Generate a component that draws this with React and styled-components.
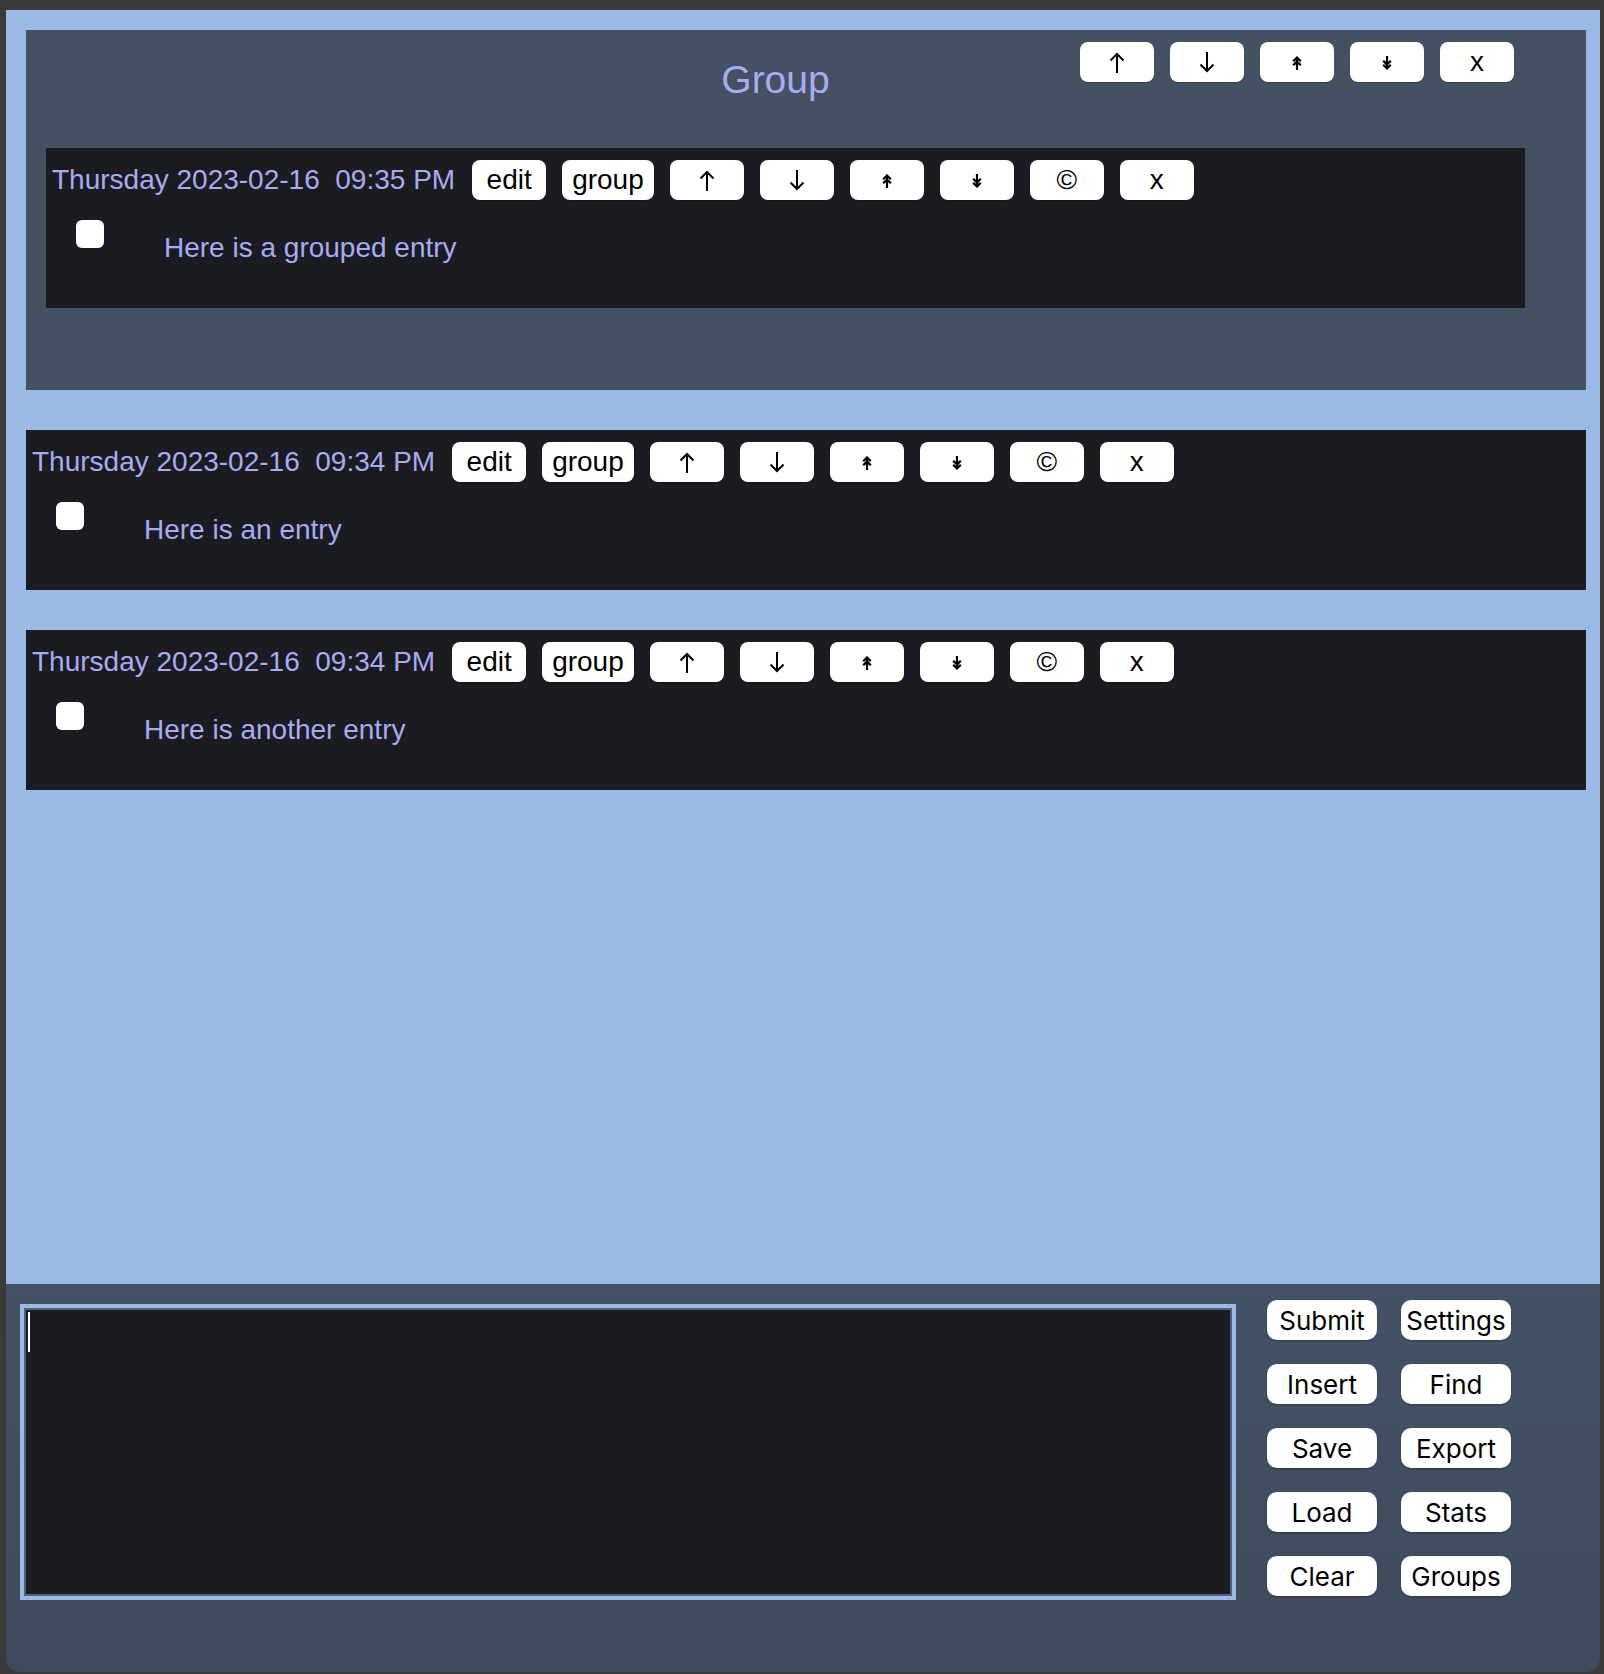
import React from 'react'
import styled, { createGlobalStyle } from 'styled-components'

const GlobalStyle = createGlobalStyle`
  html, body {
    margin: 0;
    padding: 0;
    background: #3a3a3a;
  }
  body {
    font-family: "Liberation Sans", Arial, sans-serif;
  }
`

const Window = styled.div`
  margin: 10px 4px 0 6px;
  height: 1662px;
  display: flex;
  flex-direction: column;
  border-radius: 0 0 14px 14px;
  overflow: hidden;
`

const List = styled.div`
  height: 1274px;
  box-sizing: border-box;
  background: #9ab9e5;
  padding: 20px 14px 0 20px;
  display: flex;
  flex-direction: column;
  gap: 40px;
`

const GroupBox = styled.section`
  background: #435163;
  padding: 0 61px 82px 20px;
`

const GroupHeader = styled.div`
  height: 118px;
  display: grid;
  grid-template-columns: 1fr auto 1fr;
  align-items: start;
`

const GroupTitle = styled.h2`
  grid-column: 2;
  margin: 27px 20px 0 0;
  font-size: 39px;
  line-height: 45px;
  font-weight: 400;
  color: #a8abf0;
`

const ButtonRow = styled.div`
  display: flex;
  align-items: center;
  gap: 16px;
`

const GroupButtons = styled(ButtonRow)`
  grid-column: 3;
  justify-self: end;
  margin: 12px 11px 0 0;
`

const Entry = styled.article`
  background: #1a1c21;
  padding: 12px 6px 44px;
`

const EntryHeader = styled(ButtonRow)`
  height: 40px;
`

const Stamp = styled.span`
  font-size: 28px;
  color: #a8abf0;
  white-space: pre;
  margin-right: 1px;
`

const SmallButton = styled.button`
  min-width: 74px;
  height: 40px;
  padding: 0 10px;
  border: none;
  border-radius: 8px;
  background: #fff;
  color: #000;
  font-family: "Liberation Sans", Arial, sans-serif;
  font-size: 28px;
  display: flex;
  align-items: center;
  justify-content: center;
  box-shadow: 0 1px 1px rgba(0, 0, 0, 0.25);
  cursor: pointer;
`

const EntryBody = styled.div`
  display: flex;
  align-items: flex-start;
  margin-top: 20px;
`

const Check = styled.input`
  appearance: none;
  margin: 0 60px 0 24px;
  width: 28px;
  height: 28px;
  border-radius: 6px;
  background: #fff;
  flex: none;
`

const EntryText = styled.div`
  margin-top: 12px;
  font-size: 28px;
  color: #a8abf0;
`

const Panel = styled.div`
  flex: 1;
  background: linear-gradient(#445265, #3e4b5d);
  padding: 16px 0 0 14px;
  display: flex;
  align-items: flex-start;
`

const EditorWrap = styled.div`
  position: relative;
  margin: 8px 35px 0 4px;
`

const Editor = styled.textarea`
  display: block;
  box-sizing: border-box;
  width: 1208px;
  height: 288px;
  resize: none;
  background: #1a1c21;
  border: 2px solid #4f5f76;
  outline: 4px solid #9ab9e5;
  color: #fff;
  font-size: 28px;
`

const Caret = styled.span`
  position: absolute;
  left: 4px;
  top: 4px;
  width: 2px;
  height: 40px;
  background: #fff;
`

const ActionGrid = styled.div`
  display: grid;
  grid-template-columns: 110px 110px;
  gap: 24px;
`

const ActionButton = styled.button`
  height: 40px;
  border: none;
  border-radius: 10px;
  background: #fff;
  color: #000;
  font-family: Inter, "Liberation Sans", sans-serif;
  font-size: 26px;
  padding: 0;
  box-shadow: 0 1px 2px rgba(0, 0, 0, 0.3);
  cursor: pointer;
`

const Arrow = ({ dir = 'up' }) => (
  <svg width="16" height="21" viewBox="0 0 16 21" fill="none" stroke="#000" strokeWidth="2"
    style={{ transform: dir === 'down' ? 'rotate(180deg)' : undefined }}>
    <path d="M8 2v19M1.5 8.5L8 2l6.5 6.5" />
  </svg>
)

const DoubleArrow = ({ dir = 'up' }) => (
  <svg width="10" height="14" viewBox="0 0 10 14" fill="none" stroke="#000" strokeWidth="2.2"
    style={{ transform: dir === 'down' ? 'rotate(180deg)' : undefined, marginTop: 2 }}>
    <path d="M5 1.5V14M1.2 5.2L5 1.5l3.8 3.7M1.2 9.2L5 5.5l3.8 3.7" />
  </svg>
)

const MoveButtons = () => (
  <>
    <SmallButton><Arrow /></SmallButton>
    <SmallButton><Arrow dir="down" /></SmallButton>
    <SmallButton><DoubleArrow /></SmallButton>
    <SmallButton><DoubleArrow dir="down" /></SmallButton>
  </>
)

const EntryCard = ({ stamp, text }) => (
  <Entry>
    <EntryHeader>
      <Stamp>{stamp}</Stamp>
      <SmallButton>edit</SmallButton>
      <SmallButton>group</SmallButton>
      <MoveButtons />
      <SmallButton>©</SmallButton>
      <SmallButton>x</SmallButton>
    </EntryHeader>
    <EntryBody>
      <Check type="checkbox" />
      <EntryText>{text}</EntryText>
    </EntryBody>
  </Entry>
)

const actions = ['Submit', 'Settings', 'Insert', 'Find', 'Save', 'Export', 'Load', 'Stats', 'Clear', 'Groups']

const App = () => {
  return (
    <>
      <GlobalStyle />
      <Window>
        <List>
          <GroupBox>
            <GroupHeader>
              <GroupTitle>Group</GroupTitle>
              <GroupButtons>
                <MoveButtons />
                <SmallButton>x</SmallButton>
              </GroupButtons>
            </GroupHeader>
            <EntryCard stamp="Thursday 2023-02-16  09:35 PM" text="Here is a grouped entry" />
          </GroupBox>
          <EntryCard stamp="Thursday 2023-02-16  09:34 PM" text="Here is an entry" />
          <EntryCard stamp="Thursday 2023-02-16  09:34 PM" text="Here is another entry" />
        </List>
        <Panel>
          <EditorWrap>
            <Editor />
            <Caret />
          </EditorWrap>
          <ActionGrid>
            {actions.map((a) => (
              <ActionButton key={a}>{a}</ActionButton>
            ))}
          </ActionGrid>
        </Panel>
      </Window>
    </>
  )
}

export default App
